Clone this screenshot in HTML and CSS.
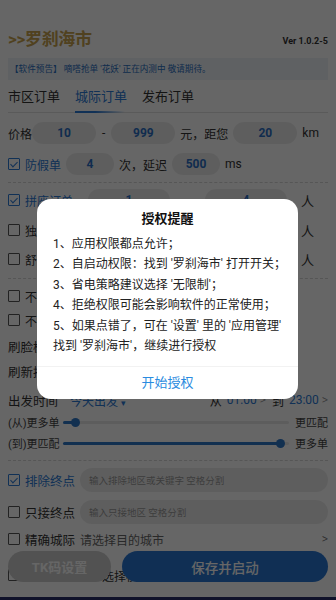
FILE: index.html
```html
<!DOCTYPE html>
<html lang="zh">
<head>
<meta charset="utf-8">
<link rel="stylesheet" href="styles.css">
</head>
<body>
<div class="page">
  <header class="head">
    <div class="brand">&gt;&gt;罗刹海市</div>
    <div class="ver">Ver 1.0.2-5</div>
  </header>
  <div class="notice"><span class="ntag">【软件预告】</span> 嘀嗒抢单 '花妖' 正在内测中 敬请期待。</div>
  <nav class="tabs">
    <span class="tab">市区订单</span>
    <span class="tab active">城际订单</span>
    <span class="tab">发布订单</span>
  </nav>

  <div class="row r-price">
    <span class="lbl">价格</span>
    <span class="pill w64">10</span>
    <span class="dash">-</span>
    <span class="pill w64">999</span>
    <span class="lbl">元，距您</span>
    <span class="pill w64">20</span>
    <span class="lbl">km</span>
  </div>
  <div class="row r-fake">
    <span class="cb on"></span><span class="lbl blue">防假单</span>
    <span class="pill w48">4</span>
    <span class="lbl">次，延迟</span>
    <span class="pill w48">500</span>
    <span class="lbl">ms</span>
  </div>
  <div class="sep"></div>

  <div class="row r-seat">
    <span class="cb on"></span><span class="lbl blue lw">拼座订单</span>
    <span class="pill w82">1</span>
    <span class="lbl mid">-</span>
    <span class="pill w82">4</span>
    <span class="lbl ren">人</span>
  </div>
  <div class="row r-seat2">
    <span class="cb"></span><span class="lbl lw">独享订单</span>
    <span class="pill w82">1</span>
    <span class="lbl mid">-</span>
    <span class="pill w82">4</span>
    <span class="lbl ren">人</span>
  </div>
  <div class="row r-seat3">
    <span class="cb"></span><span class="lbl lw">舒适订单</span>
    <span class="pill w82">1</span>
    <span class="lbl mid">-</span>
    <span class="pill w82">4</span>
    <span class="lbl ren">人</span>
  </div>
  <div class="sep s2"></div>

  <div class="row r-no1"><span class="cb"></span><span class="lbl">不接带宠物订单</span></div>
  <div class="row r-no2"><span class="cb"></span><span class="lbl">不接带行李订单</span></div>
  <div class="row r-face"><span class="lbl">刷脸模式</span></div>
  <div class="row r-ref"><span class="lbl">刷新接单</span></div>

  <div class="row r-time">
    <span class="lbl">出发时间</span>
    <span class="lbl blue day">今天出发 <span class="tri">▾</span></span>
    <span class="grow"></span>
    <span class="lbl">从</span>
    <span class="lbl blue tm">01:00 <span class="chev">&gt;</span></span>
    <span class="lbl">到</span>
    <span class="lbl blue tm">23:00 <span class="chev">&gt;</span></span>
  </div>
  <div class="row r-sl1">
    <span class="slbl">(从)更多单</span>
    <span class="track"><span class="fill" style="width:12px"></span><span class="thumb" style="left:12px"></span></span>
    <span class="slbl">更匹配</span>
  </div>
  <div class="row r-sl2">
    <span class="slbl">(到)更匹配</span>
    <span class="track"><span class="fill" style="width:217px"></span><span class="thumb" style="left:217px"></span></span>
    <span class="slbl">更多单</span>
  </div>
  <div class="sep s3"></div>

  <div class="row r-ex">
    <span class="cb on"></span><span class="lbl blue lw2">排除终点</span>
    <span class="inp">输入排除地区或关键字 空格分割</span>
  </div>
  <div class="row r-only">
    <span class="cb"></span><span class="lbl lw2">只接终点</span>
    <span class="inp">输入只接地区 空格分割</span>
  </div>
  <div class="row r-city">
    <span class="cb"></span><span class="lbl lw2">精确城际</span>
    <span class="lbl gray">请选择目的城市</span>
    <span class="grow"></span>
    <span class="chev gray">&gt;</span>
  </div>
  <div class="row r-mode">
    <span class="cb"></span><span class="lbl lw2">接单模式</span>
    <span class="lbl">选择模式</span>
  </div>
</div>

<div class="actions">
  <button class="btn tk">TK码设置</button>
  <button class="btn go">保存并启动</button>
</div>

<div class="mask">
  <div class="modal">
    <div class="mtitle">授权提醒</div>
    <div class="mbody">
      <p>1、应用权限都点允许；</p>
      <p>2、自启动权限：找到 '罗刹海市' 打开开关；</p>
      <p>3、省电策略建议选择 '无限制'；</p>
      <p>4、拒绝权限可能会影响软件的正常使用；</p>
      <p>5、如果点错了，可在 '设置' 里的 '应用管理'</p>
      <p>找到 '罗刹海市'，继续进行授权</p>
    </div>
    <div class="mbtn">开始授权</div>
  </div>
</div>
<div class="navstrip"></div>
</body>
</html>
```

FILE: styles.css
```css
* { box-sizing: border-box; margin: 0; padding: 0; }
html, body { width: 336px; height: 600px; overflow: hidden; background: #fff; }
body {
  font-family: Roboto, "Noto Sans CJK SC", "Noto Sans", sans-serif;
  color: #333;
  font-size: 12px;
}
.page { padding: 0 8px; }
.head {
  display: flex; align-items: flex-end; justify-content: space-between;
  height: 52px; padding-bottom: 2px;
}
.brand { font-size: 17px; font-weight: 700; color: #c9a34e; line-height: 22px; letter-spacing: -0.3px; }
.ver { font-size: 9px; font-weight: 700; color: #333; line-height: 18px; }
.notice {
  margin-top: 6px; height: 22px; line-height: 22px;
  background: #eef2f7; font-size: 8.6px; color: #2a6fc0; padding-left: 2px;
}
.ntag { color: #2a6fc0; }
.tabs {
  display: flex; gap: 15px; height: 33px; align-items: center;
  border-bottom: 1px solid #e2e2e2; margin-top: 0; padding-top: 2px;
}
.tab { font-size: 13px; color: #333; position: relative; line-height: 20px; }
.tab.active { color: #2b7ad6; }
.tab.active::after {
  content: ""; position: absolute; left: 0; right: 2px; bottom: -6px; height: 2px;
  background: linear-gradient(90deg, #2b7ad6 40%, rgba(43,122,214,0));
}
.row { display: flex; align-items: center; }
.lbl { font-size: 12px; white-space: nowrap; }
.blue { color: #2b7ad6; }
.gray { color: #888; }
.grow { flex: 1; }
.pill {
  height: 22px; border-radius: 11px; background: #ececec;
  color: #2b6fc4; font-weight: 700; font-size: 12px;
  display: flex; align-items: center; justify-content: center;
}
.w64 { width: 64px; }
.w48 { width: 48px; }
.w82 { width: 82px; }
.r-price { margin-top: 9px; height: 22px; }
.r-price .pill:first-of-type { margin-left: 6px; }
.r-price .dash { margin: 0 6px; }
.r-price .pill + .lbl { margin: 0 5px; }
.r-price .pill:nth-of-type(3) + .lbl { margin-right: 0; margin-left: 6px; }
.r-fake { margin-top: 9px; height: 22px; }
.r-fake .pill { margin: 0 5px; }
.r-fake .pill:first-of-type { margin-left: 6px; }
.cb {
  width: 12px; height: 12px; border: 1px solid #555; border-radius: 1px;
  margin-right: 5px; position: relative; flex: none;
}
.cb.on { border-color: #2b7ad6; }
.cb.on::after {
  content: ""; position: absolute; left: 3px; top: 1px; width: 3px; height: 6px;
  border: solid #2b7ad6; border-width: 0 1px 1px 0; transform: rotate(45deg);
}
.sep { border-top: 1px dashed #d6d6d6; margin-top: 7px; }
.r-seat { margin-top: 6px; height: 22px; }
.r-seat2 { margin-top: 8px; height: 22px; }
.r-seat3 { margin-top: 7px; height: 22px; }
.lw { width: 63px; }
.mid { width: 35px; text-align: center; }
.ren { margin-left: auto; padding-right: 14px; font-size: 13px; }
.s2 { margin-top: 8px; }
.r-no1 { margin-top: 9px; height: 16px; }
.r-no2 { margin-top: 8px; height: 16px; }
.r-face { margin-top: 10px; height: 16px; }
.r-face .lbl, .r-ref .lbl, .r-time > .lbl:first-child { font-size: 12.5px; }
.r-ref { margin-top: 9px; height: 16px; }
.r-time { margin-top: 13px; height: 16px; }
.day { margin-left: 12px; }
.tri { font-size: 9px; }
.tm { margin: 0 6px 0 5px; }
.tm:last-child { margin-right: 0; }
.chev { font-weight: 300; color: #888; }
.r-sl1 { margin-top: 7px; height: 14px; }
.r-sl2 { margin-top: 7px; height: 14px; }
.slbl { font-size: 11px; color: #444; white-space: nowrap; }
.track {
  flex: 1; height: 3px; background: #e9e9e9; margin: 0 6px 0 3px; position: relative; border-radius: 2px;
}
.fill { position: absolute; left: 0; top: 0; bottom: 0; background: #2f78c8; border-radius: 2px; }
.thumb {
  position: absolute; top: -3px; width: 9px; height: 9px; margin-left: -4px;
  border-radius: 50%; background: #2f78c8;
}
.s3 { margin-top: 10px; }
.r-ex { margin-top: 7px; height: 24px; }
.r-only { margin-top: 8px; height: 24px; }
.lw2 { width: 55px; font-size: 12.5px; }
.inp {
  flex: 1; height: 24px; border-radius: 12px; background: #ececec;
  color: #9a9a9a; font-size: 9.5px; display: flex; align-items: center; padding-left: 9px;
}
.r-city { margin-top: 7px; height: 16px; }
.r-city .gray { font-size: 12px; color: #666; }
.r-city .chev { padding-right: 0; }
.r-mode { margin-top: 20px; height: 16px; }
.r-mode .lbl:last-child { margin-left: 22px; }

.actions {
  position: fixed; left: 8px; right: 8px; top: 551px;
  display: flex; gap: 11px;
}
.btn {
  height: 31px; border: none; border-radius: 16px; font-family: inherit;
  font-weight: 700; font-size: 13px; color: #fff;
}
.tk { width: 103px; background: #cdcdcd; }
.go { flex: 1; background: #2977d3; font-weight: 500; font-size: 13.5px; }

.mask {
  position: fixed; inset: 0; background: rgba(0,0,0,0.6);
  display: flex; align-items: center; justify-content: center;
}
.modal {
  width: 261px; height: 200px; background: #fff; border-radius: 14px;
  display: flex; flex-direction: column; margin-top: -3px; margin-left: -1px;
}
.mtitle { text-align: center; font-size: 13px; font-weight: 700; color: #111; margin-top: 10px; line-height: 20px; }
.mbody { padding: 5px 0 0 16px; flex: 1; }
.mbody p { font-size: 12px; line-height: 20.5px; color: #222; white-space: nowrap; }
.mbtn {
  height: 33px; border-top: 1px solid #f2f2f2; text-align: center;
  color: #2a8be0; font-size: 13px; line-height: 32px;
}
.navstrip { position: fixed; left: 0; right: 0; bottom: 0; height: 3px; background: #10122a; }
```
